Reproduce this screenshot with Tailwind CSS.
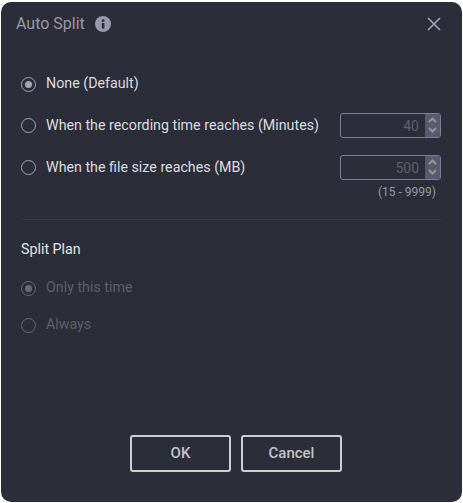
<!DOCTYPE html>
<html lang="en">

<head>
  <meta charset="UTF-8">
  <title>Auto Split</title>
  <script src="https://cdn.jsdelivr.net/npm/@tailwindcss/browser@4"></script>
</head>

<body class="w-[463px] h-[503px] overflow-hidden bg-white font-['Roboto',sans-serif]">
  <div class="ml-px mt-0.5 w-[461px] h-[500px] rounded-[10px] bg-[#2b2d38] flex flex-col pl-5 pr-[21px]">
    <header class="h-11 flex items-center justify-between -ml-[5px]">
      <div class="flex items-center gap-[10px]">
        <h1 class="text-base text-[#9a99a8]">Auto Split</h1>
        <svg class="w-4 h-4" viewBox="0 0 16 16">
          <circle cx="8" cy="8" r="8" fill="#9c98ae" />
          <rect x="6.8" y="7" width="2.6" height="5.6" fill="#2b2d38" />
          <rect x="6.8" y="3.4" width="2.6" height="2.4" fill="#2b2d38" />
        </svg>
      </div>
      <svg class="w-[14px] h-[14px]" viewBox="0 0 14 14" fill="none" stroke="#a5a2b6" stroke-width="1.7">
        <path d="M1 1l12 12M13 1L1 13" />
      </svg>
    </header>

    <section class="mt-[17px] flex flex-col">
      <label class="h-[42px] flex items-center gap-[10px]">
        <span class="w-[15px] h-[15px] rounded-full border border-[#a5a4b4] flex items-center justify-center">
          <span class="w-[7px] h-[7px] rounded-full bg-[#a5a4b4]"></span>
        </span>
        <span class="text-[14.25px] text-[#dcdce2]">None (Default)</span>
      </label>
      <label class="h-[40px] flex items-center gap-[10px]">
        <span class="w-[15px] h-[15px] rounded-full border border-[#a5a4b4]"></span>
        <span class="pt-px text-[14.25px] text-[#dcdce2] flex-1 whitespace-nowrap">When the recording time reaches (Minutes)</span>
        <span class="w-[101px] h-[25px] rounded-[3px] border border-[#7f7e99] flex justify-end">
          <span class="text-sm text-[#5f606b] leading-[24px] mr-[6px]">40</span>
          <span class="w-[15px] bg-[#5a5a6e] rounded-r-[2px] flex flex-col items-center justify-center gap-[4px]">
            <svg class="w-[9px] h-[6px]" viewBox="0 0 9 6" fill="none" stroke="#9695a3" stroke-width="2"><path d="M1 5l3.5-3.5L8 5" /></svg>
            <svg class="w-[9px] h-[6px]" viewBox="0 0 9 6" fill="none" stroke="#9695a3" stroke-width="2"><path d="M1 1l3.5 3.5L8 1" /></svg>
          </span>
        </span>
      </label>
      <label class="h-[44px] flex items-center gap-[10px]">
        <span class="w-[15px] h-[15px] rounded-full border border-[#a5a4b4]"></span>
        <span class="pt-px text-[14.25px] text-[#dcdce2] flex-1 whitespace-nowrap">When the file size reaches (MB)</span>
        <span class="w-[101px] h-[25px] rounded-[3px] border border-[#7f7e99] flex justify-end">
          <span class="text-sm text-[#5f606b] leading-[24px] mr-[6px]">500</span>
          <span class="w-[15px] bg-[#5a5a6e] rounded-r-[2px] flex flex-col items-center justify-center gap-[4px]">
            <svg class="w-[9px] h-[6px]" viewBox="0 0 9 6" fill="none" stroke="#9695a3" stroke-width="2"><path d="M1 5l3.5-3.5L8 5" /></svg>
            <svg class="w-[9px] h-[6px]" viewBox="0 0 9 6" fill="none" stroke="#9695a3" stroke-width="2"><path d="M1 1l3.5 3.5L8 1" /></svg>
          </span>
        </span>
      </label>
      <p class="text-xs text-[#9a9aa3] text-right pr-[5px] -mt-[5px]">(15 - 9999)</p>
    </section>

    <hr class="mt-[19px] border-[#363843]">

    <section class="mt-[19px]">
      <h2 class="text-[14.25px] leading-5 text-[#e4e4e8]">Split Plan</h2>
      <div class="mt-[8px] flex flex-col">
        <label class="h-[42px] flex items-center gap-[10px]">
          <span class="w-[15px] h-[15px] rounded-full border border-[#6a6a76] flex items-center justify-center">
            <span class="w-[7px] h-[7px] rounded-full bg-[#6a6a76]"></span>
          </span>
          <span class="text-[14.25px] text-[#5f606b]">Only this time</span>
        </label>
        <label class="h-[32px] flex items-center gap-[10px]">
          <span class="w-[15px] h-[15px] rounded-full border border-[#6a6a76]"></span>
          <span class="text-[14.25px] text-[#5f606b]">Always</span>
        </label>
      </div>
    </section>

    <footer class="mt-auto mb-[30px] ml-[109px] flex gap-[10px]">
      <button class="w-[101px] h-[37px] rounded-[3px] border-2 border-[#cfcfd2] text-[15px] font-medium text-[#c4c4c8]">OK</button>
      <button class="w-[101px] h-[37px] rounded-[3px] border-2 border-[#cfcfd2] text-[15px] font-medium text-[#c4c4c8]">Cancel</button>
    </footer>
  </div>
</body>

</html>
